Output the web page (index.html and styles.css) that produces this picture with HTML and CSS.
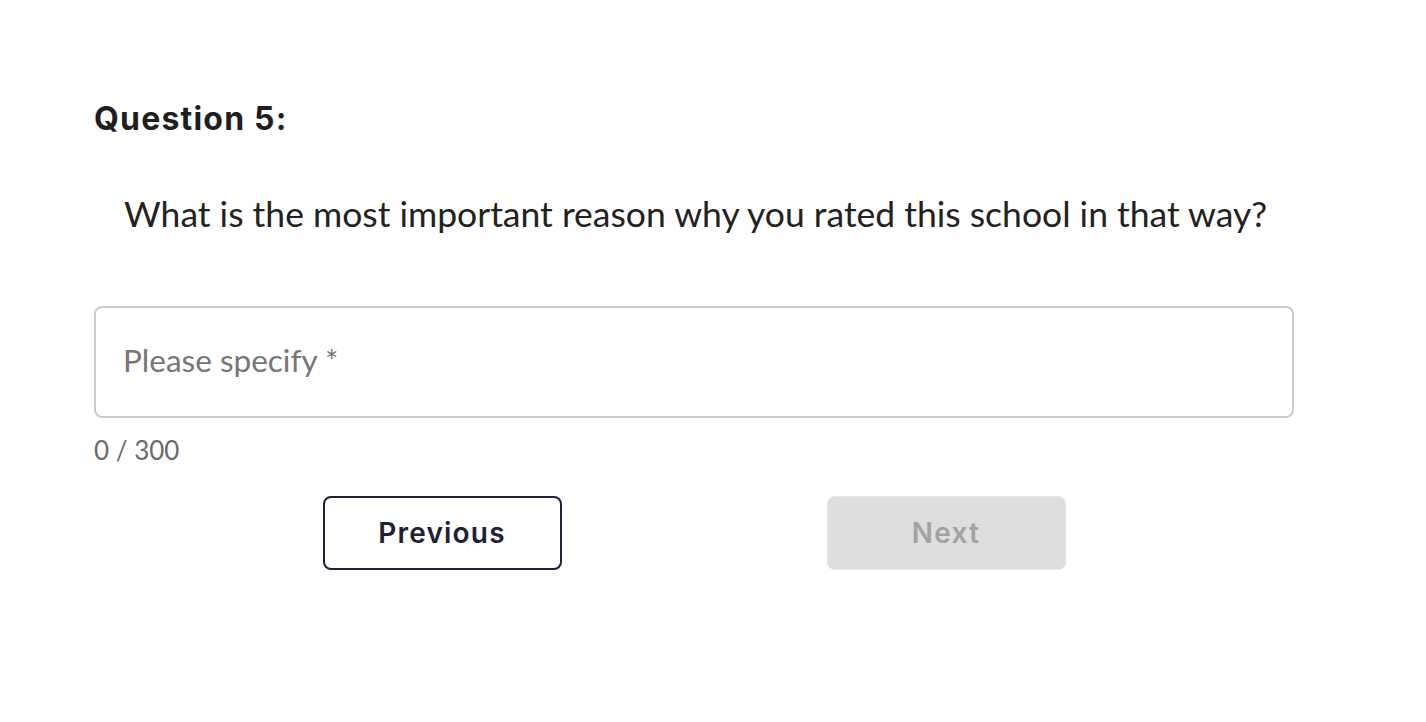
FILE: index.html
```html
<!DOCTYPE html>
<html lang="en">
<head>
    <meta charset="UTF-8">
    <meta name="viewport" content="width=device-width, initial-scale=1.0">
    <title>Question 5</title>
    <link rel="stylesheet" href="styles.css">
</head>
<body>
    <div class="container">
        <h2 class="question-number">Question 5:</h2>
        <p class="question-text">What is the most important reason why you rated this school in that way?</p>

        <div class="answer">
            <input type="text" id="reason" class="answer-input" placeholder="Please specify *" maxlength="300">
            <div class="counter"><span id="count">0</span> / 300</div>
        </div>

        <div class="nav">
            <button type="button" class="btn btn-prev">Previous</button>
            <button type="button" class="btn btn-next" disabled>Next</button>
        </div>
    </div>
</body>
</html>
```

FILE: styles.css
```css
body {
    margin: 0;
    background: #fff;
    font-family: Lato, "Open Sans", sans-serif;
    color: #222;
}
.container {
    width: 1200px;
    margin-left: 94px;
    padding-top: 99px;
}
.question-number {
    margin: 0;
    font-family: Inter, sans-serif;
    font-weight: 700;
    font-size: 32px;
    line-height: 40px;
    letter-spacing: 1.2px;
    color: #1f1f1f;
}
.question-text {
    margin: 53px 0 0 30px;
    font-size: 35.5px;
    line-height: 44px;
    color: #222;
}
.answer {
    margin-top: 70px;
}
.answer-input {
    display: block;
    box-sizing: border-box;
    width: 1200px;
    height: 112px;
    padding: 0 27px 4px;
    border: 2px solid #cbcbcb;
    border-radius: 8px;
    font-family: Lato, sans-serif;
    font-size: 31.5px;
    color: #222;
    outline: none;
}
.answer-input::placeholder {
    color: #767676;
}
.counter {
    margin-top: 17px;
    font-size: 26px;
    line-height: 30px;
    color: #6b6b6b;
}
.nav {
    display: flex;
    justify-content: center;
    gap: 265px;
    margin-top: 31px;
}
.btn {
    box-sizing: border-box;
    width: 239px;
    height: 74px;
    border-radius: 8px;
    font-family: Inter, sans-serif;
    font-size: 28px;
    font-weight: 600;
    letter-spacing: 1.2px;
    cursor: pointer;
}
.btn-prev {
    background: #fff;
    border: 2px solid #1c2138;
    color: #1c2138;
}
.btn-next {
    background: #dedede;
    border: 1px solid #e6e6e6;
    color: #a3a3a3;
    cursor: default;
}
```
